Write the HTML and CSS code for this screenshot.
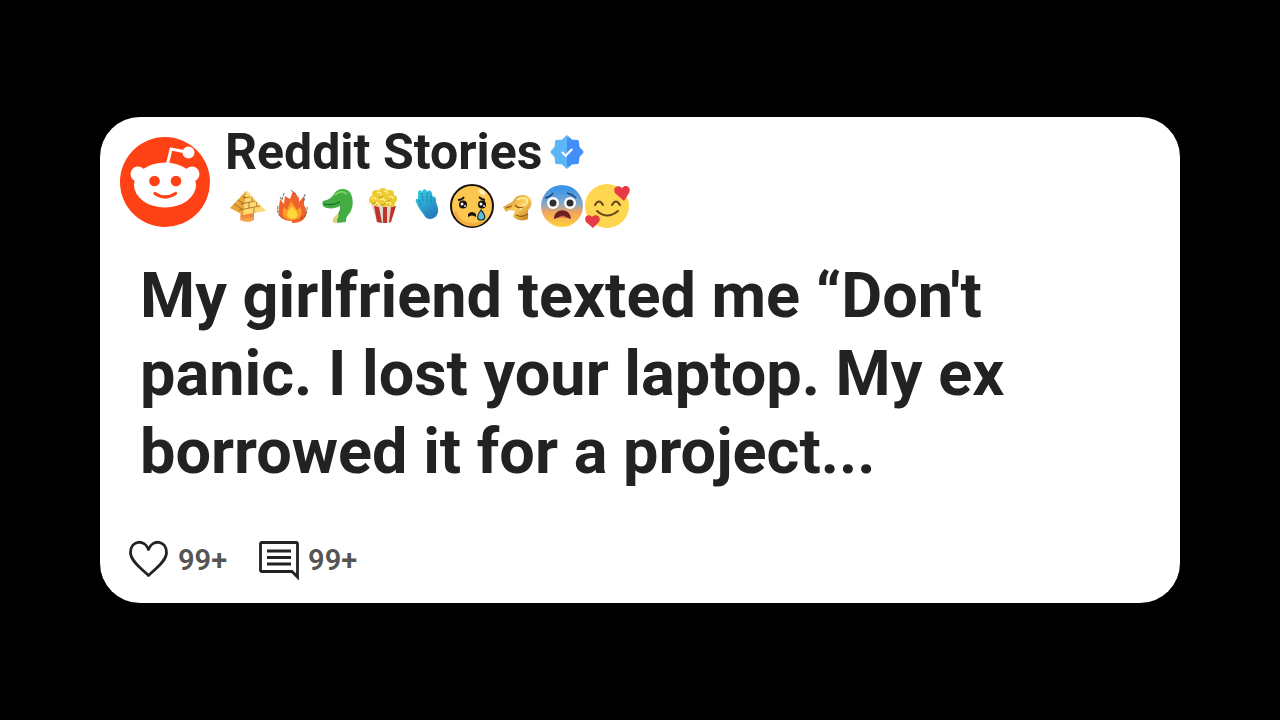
FILE: index.html
```html
<!DOCTYPE html>
<html lang="en">
<head>
    <meta charset="UTF-8" />
    <meta name="viewport" content="width=device-width, initial-scale=1.0" />
    <title>Reddit Stories</title>
    <link rel="stylesheet" href="styles.css">
</head>
<body>
    <main class="page">
        <article class="card">
            <header class="card-header">
                <svg class="avatar" viewBox="0 0 90 90" aria-hidden="true">
                    <circle cx="45" cy="45" r="45" fill="#ff4216" />
                    <g fill="#fff">
                        <circle cx="18" cy="37" r="7.500" />
                        <circle cx="72" cy="37" r="7.500" />
                        <ellipse cx="45" cy="48" rx="31" ry="22.500" />
                        <circle cx="68.500" cy="15.500" r="6" />
                    </g>
                    <path d="M47.500 27l3.500-15 15 3" fill="none" stroke="#fff" stroke-width="3" stroke-linejoin="round" />
                    <circle cx="34.500" cy="44" r="5.300" fill="#ff4216" />
                    <circle cx="56" cy="44" r="5.300" fill="#ff4216" />
                    <path d="M35 56.500q10 7 20.500 0" fill="none" stroke="#ff4216" stroke-width="3.300" stroke-linecap="round" />
                </svg>
                <div class="profile">
                    <div class="name-row">
                        <h1 class="name">Reddit Stories</h1>
                        <svg class="verified" viewBox="0 0 34 34" role="img" aria-label="Verified">
                            <path d="M17 2l4.500 4 6 0.500 0.500 6 4 4.500-4 4.500-0.500 6-6 0.500L17 32z" fill="#4290f7" stroke="#4290f7" stroke-width="3" stroke-linejoin="round" />
                            <path d="M17 2l-4.500 4-6 0.500-0.500 6L2 17l4 4.500 0.500 6 6 0.500L17 32z" fill="#5cb6f5" stroke="#5cb6f5" stroke-width="3" stroke-linejoin="round" />
                            <path d="M17 2l4.500 4v22L17 32z" fill="#4290f7" />
                            <path d="M12 17l3.700 3.700 6.500-6.700" fill="none" stroke="#fff" stroke-width="2.200" />
                        </svg>
                    </div>
                    <div class="awards" aria-hidden="true">
                        <!-- pyramid -->
                        <svg class="award" viewBox="0 0 45 44">
                            <defs>
                                <linearGradient id="stem" x2="0" y2="1"><stop stop-color="#dd6f22" /><stop offset="1" stop-color="#ffab58" /></linearGradient>
                            </defs>
                            <path d="M16 27h13v9q-6 4-14 0z" fill="url(#stem)" />
                            <path d="M21.500 6.500L5 24l13 7z" fill="#e9a63a" />
                            <path d="M21.500 6.500L41 27l-23 4z" fill="#ffd873" />
                            <path d="M18 14l7-1M16 20l14-3M14 26l21-4M27 13v4M24 18v6M31 18l1 4M29 24v5M18 12l3 2M13 16l6 4M9 20l9 6" fill="none" stroke="#9a651b" stroke-width="0.800" />
                        </svg>
                        <!-- fire -->
                        <svg class="award" viewBox="0 0 45 44">
                            <path d="M22 37C11 37 7 31 9 23l1-8 4 5 1-8 5 3 3-8 6 7v4l5-6 0 9 2 4c2 8-3 14-14 14z" fill="#f0622b" />
                            <path d="M14 9l-2 7-2-3M21 6l6 5M35 10l-1 7M8 22q-2 8 4 12M37 23q1 8-6 12" fill="none" stroke="#3b2a2a" stroke-width="0.700" stroke-dasharray="3 1" />
                            <path d="M22 36c-9 0-11-6-8-13l3 3 4-9 6 9 3-3c4 8 0 13-8 13z" fill="#ff9c26" />
                            <path d="M22 35c-6-1-6-6-3-9l3-4 4 5c3 4 1 8-4 8z" fill="#ffd83b" />
                        </svg>
                        <!-- dinosaur -->
                        <svg class="award" viewBox="0 0 45 44">
                            <path d="M8 17c4-1 8-2 11-7 4-7 14-6 17 0 3 7 2 15-2 20-3 3-3 6-3 8l-9 1c-2-8 4-11 3-17-5 3-12 3-16 1-2-2-2-4-1-6z" fill="#43ad43" />
                            <path d="M20 11q6-6 12-1" fill="none" stroke="#75d45e" stroke-width="2" />
                            <path d="M21 39c-3 0-4-1-3-4l3-4h3z" fill="#e2ce74" />
                            <path d="M9 20q8 2 16-2" fill="none" stroke="#146c28" stroke-width="1.200" />
                        </svg>
                        <!-- popcorn -->
                        <svg class="award" viewBox="0 0 45 44">
                            <path d="M11 20l25 2-5 16q-7 2-14 0z" fill="#ded8d3" />
                            <path d="M14 22l5 1 3 16-5-1zM23 23h4v16h-4zM31 23l5-1-5 16-2 1z" fill="#be342b" />
                            <g fill="#eecb35">
                                <circle cx="13" cy="16" r="4" /><circle cx="16" cy="10" r="4" /><circle cx="23" cy="9" r="5" />
                                <circle cx="30" cy="10" r="4" /><circle cx="33" cy="15" r="4" /><circle cx="31" cy="19" r="4" />
                                <circle cx="24" cy="18" r="5" /><circle cx="16" cy="18" r="4" /><circle cx="23" cy="14" r="7" />
                            </g>
                            <path d="M12 15q3-3 4 1M17 9q4-2 4 2M24 7q4 0 3 3M29 13q4-2 4 2M20 16q3-3 5 1M15 20q3-3 4 1M26 19q4-2 5 1" fill="none" stroke="#fff48c" stroke-width="1.300" />
                            <path d="M12 19q2 2 4-1M19 13q2 2 4-1M27 17q3 1 4-2M21 21q3 1 4-2" fill="none" stroke="#be9419" />
                        </svg>
                        <!-- hand -->
                        <svg class="award" viewBox="0 0 45 44">
                            <defs>
                                <linearGradient id="glove" x2="0.500" y2="1"><stop stop-color="#35d1e4" /><stop offset="1" stop-color="#247fbd" /></linearGradient>
                            </defs>
                            <path d="M14 24l-3-6c-1-3 1-4 2-3l0-6c0-3 3-4 4-1 1-4 5-3 5 0 2-3 5-1 5 2l1 3c3-1 3 2 3 5l2 6c1 7-3 11-8 11q-4 0-6-4z" fill="url(#glove)" />
                            <path d="M17 9l1 9M22 9v9M26 12v7M14 16l2 5" fill="none" stroke="#147b9a" stroke-width="1" stroke-dasharray="2 1" />
                        </svg>
                        <!-- crying face -->
                        <svg class="award" viewBox="0 0 45 44">
                            <circle cx="22" cy="22" r="21" fill="#fdc64f" stroke="#17120d" stroke-width="2" />
                            <path d="M5 28A18 18 0 0 0 32 38" fill="none" stroke="#f3ab3c" stroke-width="3" />
                            <ellipse cx="32" cy="8" rx="4" ry="2" fill="#fff0b6" transform="rotate(35 32 8)" />
                            <path d="M8 16q4 0 6-3M29 13q3 3 6 3" fill="none" stroke="#17120d" stroke-width="1.800" />
                            <circle cx="13" cy="20.500" r="4" fill="#17120d" /><circle cx="32" cy="20.500" r="4" fill="#17120d" />
                            <g fill="#fff"><circle cx="12" cy="20" r="1.500" /><circle cx="15" cy="22" r="0.900" /><circle cx="31" cy="20" r="1.500" /><circle cx="34" cy="22" r="0.900" /></g>
                            <path d="M18 33v-3q4-4 8 0v3q-4-3-8 0z" fill="#17120d" />
                            <path d="M31 26c6 7 4 10 0 10s-5-3 0-10z" fill="#55bfdc" stroke="#17303b" stroke-width="1.200" />
                        </svg>
                        <!-- golden fist -->
                        <svg class="award" viewBox="0 0 45 44">
                            <defs>
                                <linearGradient id="gold" x2="1" y2="1"><stop stop-color="#b9771a" /><stop offset="0.500" stop-color="#ffd060" /><stop offset="1" stop-color="#b87510" /></linearGradient>
                            </defs>
                            <path d="M8 23l9-5 3-4c4-4 12-4 15 0 3 5 1 10-2 12v9c-6 3-13 1-15-3l2-5-5-1-4 2z" fill="url(#gold)" />
                            <path d="M22 16q6-4 10 0 1 5-4 5l-3 5" fill="none" stroke="#ffe89a" stroke-width="2" />
                            <path d="M20 21q3 4 8 2M21 31q6 3 12-1M11 24l6-2" fill="none" stroke="#96580d" stroke-width="1.300" />
                        </svg>
                        <!-- scared face -->
                        <svg class="award" viewBox="0 0 45 44">
                            <defs>
                                <linearGradient id="fear" x2="0" y2="1"><stop offset="0.100" stop-color="#3c95e8" /><stop offset="0.450" stop-color="#86a9c9" /><stop offset="0.650" stop-color="#f2a45b" /><stop offset="1" stop-color="#ffd23e" /></linearGradient>
                            </defs>
                            <circle cx="22" cy="22" r="21" fill="url(#fear)" />
                            <path d="M5 14q5-1 8-5M27 9q5 1 9 5" fill="none" stroke="#174674" stroke-width="1.300" />
                            <circle cx="13" cy="19" r="6" fill="#fff" /><circle cx="30" cy="19" r="6" fill="#fff" />
                            <circle cx="13" cy="19" r="3.500" fill="#302d31" /><circle cx="30" cy="19" r="3.500" fill="#302d31" />
                            <path d="M14 35c0-11 16-12 17 0q-9-4-17 0z" fill="#6d2022" />
                            <path d="M17 34q6-5 11 0-6-2-11 0z" fill="#dc5647" />
                        </svg>
                        <!-- smiling face with hearts -->
                        <svg class="award" viewBox="0 0 45 44">
                            <circle cx="22" cy="22" r="22" fill="#ffd64f" />
                            <path d="M10 21q4-7 8 0M27 21q4-7 8 0M12 27q10 9 21 0" fill="none" stroke="#65471b" stroke-width="2" stroke-linecap="round" />
                            <path d="M39 17L30 9c-3-5 3-9 7-5 4-5 10 0 7 5z" fill="#e73b43" />
                            <path d="M8 44L1 38c-3-6 3-9 6-5 4-4 10 0 7 5z" fill="#e73b43" />
                        </svg>
                    </div>
                </div>
            </header>

            <p class="story">My girlfriend texted me “Don't panic. I lost your laptop. My ex borrowed it for a project...</p>

            <footer class="actions">
                <button type="button" class="action" aria-label="Like, 99+">
                    <svg class="icon" viewBox="0 0 40 42" aria-hidden="true">
                        <path d="M19.500 36.500C14 31 1.500 22.500 1.500 13.500c0-12 14-14 18-3 4-11 18-9 18 3 0 9-12.500 17.500-18 23z" fill="none" stroke="#222" stroke-width="2.800" stroke-linejoin="round" />
                    </svg>
                    <span>99+</span>
                </button>
                <button type="button" class="action" aria-label="Comments, 99+">
                    <svg class="icon" viewBox="0 0 40 42" aria-hidden="true">
                        <path d="M3 3.500h34q1.500 0 1.500 1.500v33l-5.500-5.500H3q-1.500 0-1.500-1.500V5Q1.500 3.500 3 3.500zM8 12h24M8 18.500h24M8 25h24" fill="none" stroke="#222" stroke-width="2.800" />
                    </svg>
                    <span>99+</span>
                </button>
            </footer>
        </article>
    </main>
</body>
</html>
```
FILE: styles.css
```css
* { box-sizing: border-box; }

body {
    margin: 0;
    background: #000;
    color: #222;
    font-family: Roboto, sans-serif;
}

.page {
    display: flex;
    align-items: center;
    justify-content: center;
    min-height: 100vh;
    padding: 16px 100px;
}

.card {
    width: 100%;
    padding: 11px 20px 22px;
    background: #fff;
    border-radius: 40px;
}

/* Profile */
.card-header {
    display: flex;
    align-items: flex-start;
    gap: 15px;
}

.avatar { flex: none; width: 90px; height: 90px; margin-top: 9px; }

.name-row {
    display: flex;
    align-items: center;
    gap: 8px;
}

.name {
    margin: 0;
    font-size: 50px;
    font-weight: 700;
    line-height: 48px;
}

.verified { width: 34px; height: 34px; }

.awards { display: flex; margin-top: 8px; }

.award { width: 45px; height: 44px; }

/* Story text */
.story {
    max-width: 960px;
    margin: 29px 20px 48px;
    font-size: 63px;
    font-weight: 700;
    line-height: 78px;
}

/* Counters */
.actions {
    display: flex;
    gap: 32px;
    padding-left: 9px;
}

.action {
    display: flex;
    align-items: center;
    gap: 9px;
    padding: 0;
    border: 0;
    background: none;
    color: #555;
    font: 600 29px/42px Roboto, sans-serif;
    cursor: pointer;
}

.icon { width: 40px; height: 42px; }
```
